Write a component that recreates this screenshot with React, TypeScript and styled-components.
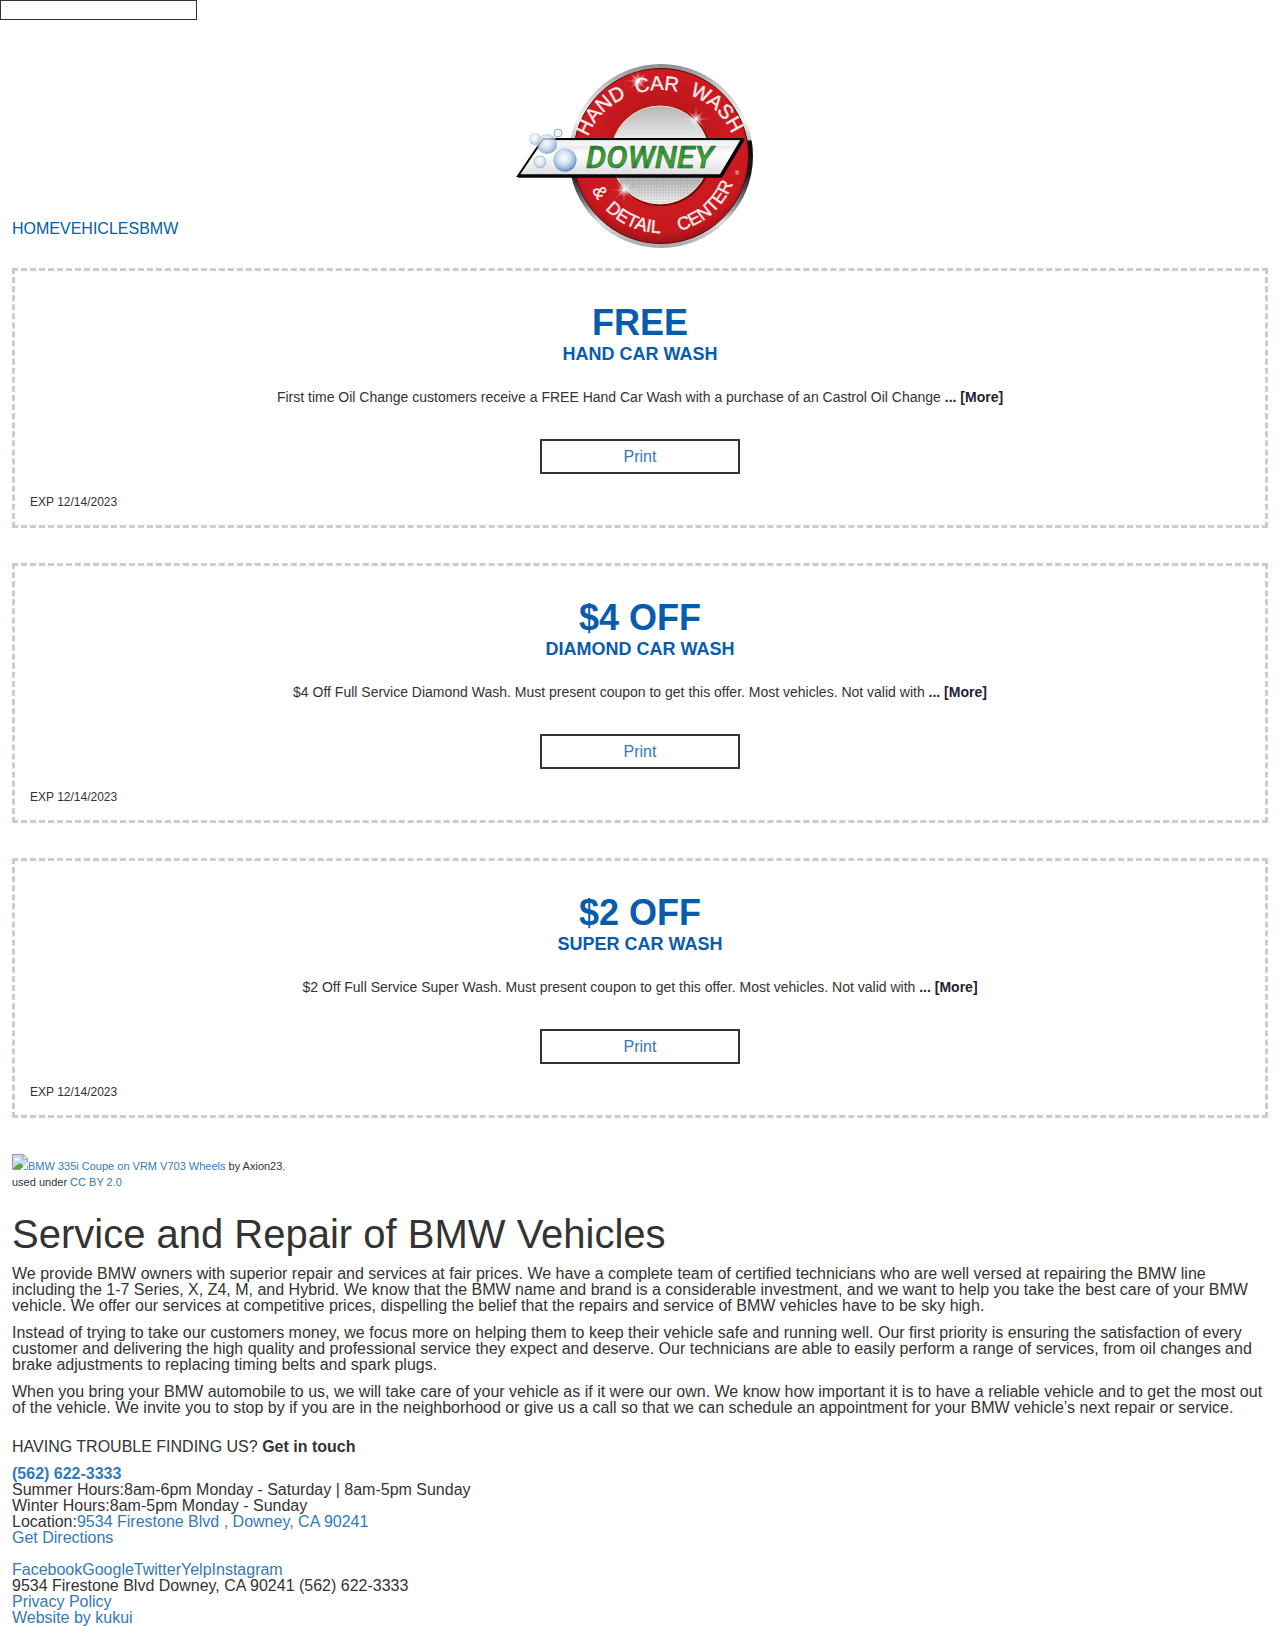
import React from "react";
import styled, { createGlobalStyle } from "styled-components";

const GlobalStyle = createGlobalStyle`
  *, *::before, *::after { box-sizing: border-box; }
  body {
    margin: 0;
    background: #fff;
    color: #333;
    font-family: "Liberation Sans", Arial, Helvetica, sans-serif;
    font-size: 16px;
    line-height: 16px;
  }
`;

const SearchInput = styled.input`
  display: block;
  width: 197px;
  height: 20px;
  padding: 0 4px;
  border: 1px solid #333;
  border-radius: 0;
  background: #fff;
  font: inherit;
`;

const Link = styled.a`
  color: #337ab7;
  text-decoration: none;
`;

const Header = styled.header`
  display: grid;
  grid-template-columns: 1fr auto 1fr;
  align-items: end;
  padding: 40px 12px 0;
`;

const Breadcrumbs = styled.nav`
  display: flex;
  padding-bottom: 13px;
`;

const Crumb = styled(Link)`
  color: #0461a3;
`;

const LogoLink = styled.a`
  display: block;
`;

const LogoSvg = styled.svg`
  display: block;
`;

const Main = styled.main`
  padding: 0 12px;
`;

const Coupons = styled.section`
  display: grid;
  gap: 35px;
  padding: 18px 0 36px;
`;

const CouponCard = styled.article`
  display: flex;
  flex-direction: column;
  align-items: center;
  padding: 34px 15px 15px;
  border: 3px dashed #c8cecd;
  text-align: center;
`;

const CouponTitle = styled.h2`
  margin: 0 0 4px;
  color: #085cad;
  font-size: 36px;
  line-height: 36px;
`;

const CouponSubtitle = styled.h3`
  margin: 0 0 24px;
  color: #085cad;
  font-size: 18px;
  line-height: 18px;
`;

const CouponText = styled.p`
  margin: 0 0 32px;
  font-size: 14px;
  line-height: 20px;
`;

const MoreLink = styled(Link)`
  color: #223;
  font-weight: bold;
`;

const PrintLink = styled(Link)`
  display: flex;
  align-items: center;
  justify-content: center;
  width: 200px;
  height: 35px;
  border: 2px solid #333;
`;

const Expiry = styled.div`
  align-self: flex-start;
  margin-top: 20px;
  font-size: 12px;
  line-height: 16px;
`;

const Credit = styled.div`
  font-size: 11px;
  line-height: 16px;
`;

const MissingPicture = styled.svg`
  display: inline-block;
  vertical-align: baseline;
`;

const Title = styled.h1`
  margin: 22px 0 10px;
  font-size: 40px;
  font-weight: normal;
  line-height: 44px;
`;

const Paragraph = styled.p`
  margin: 0 0 11px;
`;

const Footer = styled.footer`
  padding: 12px 12px 0;
`;

const Socials = styled.div`
  display: flex;
  margin-top: 16px;
`;

function Logo() {
  return (
    <LogoSvg width="250" height="190" viewBox="0 0 250 190" role="img" aria-label="Downey Hand Car Wash & Detail Center">
      <defs>
        <linearGradient id="rim" x1="0" y1="0" x2="0" y2="1">
          <stop offset="0" stopColor="#8d8d8d" />
          <stop offset="0.12" stopColor="#c4c4c4" />
          <stop offset="0.3" stopColor="#f2f2f2" />
          <stop offset="0.41" stopColor="#c5c5c5" />
          <stop offset="0.42" stopColor="#0a0a0a" />
          <stop offset="0.6" stopColor="#1c1c1c" />
          <stop offset="0.74" stopColor="#777" />
          <stop offset="0.86" stopColor="#ddd" />
          <stop offset="1" stopColor="#a5a5a5" />
        </linearGradient>
        <radialGradient id="red" cx="0.5" cy="0.42" r="0.6">
          <stop offset="0" stopColor="#a80f14" />
          <stop offset="0.65" stopColor="#cb1b21" />
          <stop offset="0.85" stopColor="#c9191f" />
          <stop offset="1" stopColor="#921114" />
        </radialGradient>
        <linearGradient id="disc" x1="0" y1="0" x2="0" y2="1">
          <stop offset="0" stopColor="#b5b5b5" />
          <stop offset="0.35" stopColor="#ececec" />
          <stop offset="0.7" stopColor="#a8a8a8" />
          <stop offset="0.9" stopColor="#dadada" />
          <stop offset="1" stopColor="#f5f5f5" />
        </linearGradient>
        <linearGradient id="plate" x1="0" y1="0" x2="0" y2="1">
          <stop offset="0" stopColor="#d5d5d8" />
          <stop offset="0.4" stopColor="#fff" />
          <stop offset="1" stopColor="#dcdce0" />
        </linearGradient>
        <linearGradient id="green" x1="0" y1="0" x2="0" y2="1">
          <stop offset="0" stopColor="#1b6e2c" />
          <stop offset="0.55" stopColor="#4aa636" />
          <stop offset="1" stopColor="#1f862e" />
        </linearGradient>
        <radialGradient id="bubble" cx="0.45" cy="0.4" r="0.62">
          <stop offset="0" stopColor="#fbfdff" />
          <stop offset="0.45" stopColor="#d4e2f1" />
          <stop offset="0.8" stopColor="#8fb1da" />
          <stop offset="1" stopColor="#4a79b8" />
        </radialGradient>
        <radialGradient id="glow">
          <stop offset="0" stopColor="#fff" />
          <stop offset="0.3" stopColor="#fff" stopOpacity="0.5" />
          <stop offset="1" stopColor="#fff" stopOpacity="0" />
        </radialGradient>
        <pattern id="mesh" width="3" height="3" patternUnits="userSpaceOnUse">
          <circle cx="1" cy="1" r="0.7" fill="#888" opacity="0.55" />
        </pattern>
        <path id="topArc" d="M70 96 A75.500 66 0 0 1 221 96" />
        <path id="bottomArc" d="M69 96 A77 77 0 0 0 223 96" />
        <g id="star">
          <circle r="7" fill="url(#glow)" />
          <path d="M0 -15L0.500 -0.500L15 0L0.500 0.500L0 15L-0.500 0.500L-15 0L-0.500 -0.500Z" fill="#fff" opacity="0.5" />
          <path d="M-8 -8L0.500 -0.500L8 8L-0.500 0.500ZM8 -8L0.500 0.500L-8 8L-0.500 -0.500Z" fill="#fff" opacity="0.5" />
        </g>
      </defs>
      <circle cx="146" cy="96" r="92" fill="url(#rim)" />
      <circle cx="146" cy="96" r="87.500" fill="url(#red)" stroke="#54090b" strokeWidth="1" />
      <circle cx="146" cy="96" r="50" fill="#6d080b" />
      <circle cx="145" cy="95" r="49" fill="url(#disc)" stroke="#eadfbd" strokeWidth="1" />
      <path d="M101 116A49 49 0 0 0 189 116Z" fill="url(#mesh)" />
      <g fill="#ececec" stroke="#ececec" strokeWidth="0.400" fontFamily="Liberation Sans, Arial, sans-serif" textAnchor="middle">
        <g fontSize="20">
          <text><textPath href="#topArc" startOffset="21.500%">HAND</textPath></text>
          <text><textPath href="#topArc" startOffset="48.500%">CAR</textPath></text>
          <text><textPath href="#topArc" startOffset="76.500%">WASH</textPath></text>
        </g>
        <g fontSize="18">
          <text><textPath href="#bottomArc" startOffset="17%">&amp;</textPath></text>
          <text><textPath href="#bottomArc" startOffset="37%">DETAIL</textPath></text>
          <text><textPath href="#bottomArc" startOffset="73%">CENTER</textPath></text>
        </g>
      </g>
      <text x="220" y="115" fontSize="6" fill="#fff" fontFamily="Liberation Sans, Arial, sans-serif">®</text>
      <path d="M28 79H228L206 116H3Z" fill="url(#plate)" stroke="#070707" strokeWidth="2" />
      <path d="M3 116H206L228 79" fill="none" stroke="#070707" strokeWidth="3.500" />
      <path d="M31 81H224L221 86H28Z" fill="#fff" opacity="0.6" />
      <text x="71" y="108" fontFamily="Roboto, sans-serif" fontSize="32" fontStyle="italic" fontWeight="500" fill="url(#green)" stroke="#1d6c2b" strokeWidth="0.600" strokeLinejoin="round">DOWNEY</text>
      <g fill="url(#bubble)">
        <circle cx="20" cy="79" r="6" opacity="0.6" />
        <circle cx="32" cy="84" r="10" opacity="0.75" />
        <circle cx="25" cy="102" r="6" opacity="0.4" />
        <circle cx="50" cy="100" r="11.500" />
      </g>
      <circle cx="25" cy="102" r="6" fill="none" stroke="#8baacb" opacity="0.6" />
      <circle cx="43" cy="73" r="4" fill="#eef4fa" stroke="#8baacb" strokeWidth="1" />
      <use href="#star" x="123" y="21" />
      <use href="#star" x="181" y="59" />
      <use href="#star" x="109" y="130" />
    </LogoSvg>
  );
}

function BrokenImage() {
  return (
    <MissingPicture width="16" height="16" viewBox="0 0 16 16" role="img" aria-label="BMW">
      <path d="M0.500 0.500H11L15.500 5V15.500H0.500Z" fill="#c5d8f6" stroke="#999" />
      <path d="M11 0.500V5H15.500Z" fill="#fff" stroke="#999" />
      <path d="M3 6C2 4 5 3 6 4.500C8 4 8 6.500 7 6.500H3Z" fill="#fff" />
      <path d="M1 15C3 12 6 9.500 8 9.500C10 9.500 11 11 12 15Z" fill="#55a83c" />
      <path d="M8 16L16 8V11L11 16Z" fill="#fff" />
      <path d="M15 11V15H11Z" fill="#fff" />
    </MissingPicture>
  );
}

const coupons = [
  {
    title: "FREE",
    subtitle: "HAND CAR WASH",
    text: "First time Oil Change customers receive a FREE Hand Car Wash with a purchase of an Castrol Oil Change",
  },
  {
    title: "$4 OFF",
    subtitle: "DIAMOND CAR WASH",
    text: "$4 Off Full Service Diamond Wash. Must present coupon to get this offer. Most vehicles. Not valid with",
  },
  {
    title: "$2 OFF",
    subtitle: "SUPER CAR WASH",
    text: "$2 Off Full Service Super Wash. Must present coupon to get this offer. Most vehicles. Not valid with",
  },
];

export default function App() {
  return (
    <>
      <GlobalStyle />
      <SearchInput type="text" aria-label="Search" />
      <Header>
        <Breadcrumbs aria-label="Breadcrumb">
          <Crumb href="#home">HOME</Crumb>
          <Crumb href="#vehicles">VEHICLES</Crumb>
          <Crumb href="#bmw">BMW</Crumb>
        </Breadcrumbs>
        <LogoLink href="#home"><Logo /></LogoLink>
      </Header>
      <Main>
        <Coupons>
          {coupons.map((c) => (
            <CouponCard key={c.title}>
              <CouponTitle>{c.title}</CouponTitle>
              <CouponSubtitle>{c.subtitle}</CouponSubtitle>
              <CouponText>
                {c.text} <MoreLink href="#more">... [More]</MoreLink>
              </CouponText>
              <PrintLink href="#print">Print</PrintLink>
              <Expiry>EXP 12/14/2023</Expiry>
            </CouponCard>
          ))}
        </Coupons>
        <Credit>
          <BrokenImage />
          <Link href="#photo">BMW 335i Coupe on VRM V703 Wheels</Link> by Axion23<Link href="#author">,</Link>
          <br />
          used under <Link href="#license">CC BY 2.0</Link>
        </Credit>
        <Title>Service and Repair of BMW Vehicles</Title>
        <Paragraph>
          We provide BMW owners with superior repair and services at fair prices. We have a complete team of certified
          technicians who are well versed at repairing the BMW line including the 1-7 Series, X, Z4, M, and Hybrid. We
          know that the BMW name and brand is a considerable investment, and we want to help you take the best care of
          your BMW vehicle. We offer our services at competitive prices, dispelling the belief that the repairs and
          service of BMW vehicles have to be sky high.
        </Paragraph>
        <Paragraph>
          Instead of trying to take our customers money, we focus more on helping them to keep their vehicle safe and
          running well. Our first priority is ensuring the satisfaction of every customer and delivering the high
          quality and professional service they expect and deserve. Our technicians are able to easily perform a range
          of services, from oil changes and brake adjustments to replacing timing belts and spark plugs.
        </Paragraph>
        <Paragraph>
          When you bring your BMW automobile to us, we will take care of your vehicle as if it were our own. We know how
          important it is to have a reliable vehicle and to get the most out of the vehicle. We invite you to stop by if
          you are in the neighborhood or give us a call so that we can schedule an appointment for your BMW vehicle’s
          next repair or service.
        </Paragraph>
      </Main>
      <Footer>
        <Paragraph>
          HAVING TROUBLE FINDING US? <strong>Get in touch</strong>
        </Paragraph>
        <div><strong><Link href="tel:5626223333">(562) 622-3333</Link></strong></div>
        <div>Summer Hours:8am-6pm Monday - Saturday | 8am-5pm Sunday</div>
        <div>Winter Hours:8am-5pm Monday - Sunday</div>
        <div>Location:<Link href="#map">9534 Firestone Blvd , Downey, CA 90241</Link></div>
        <div><Link href="#directions">Get Directions</Link></div>
        <Socials>
          <Link href="#facebook">Facebook</Link>
          <Link href="#google">Google</Link>
          <Link href="#twitter">Twitter</Link>
          <Link href="#yelp">Yelp</Link>
          <Link href="#instagram">Instagram</Link>
        </Socials>
        <div>9534 Firestone Blvd Downey, CA 90241 (562) 622-3333</div>
        <div><Link href="#privacy">Privacy Policy</Link></div>
        <div><Link href="#kukui">Website by kukui</Link></div>
      </Footer>
    </>
  );
}
